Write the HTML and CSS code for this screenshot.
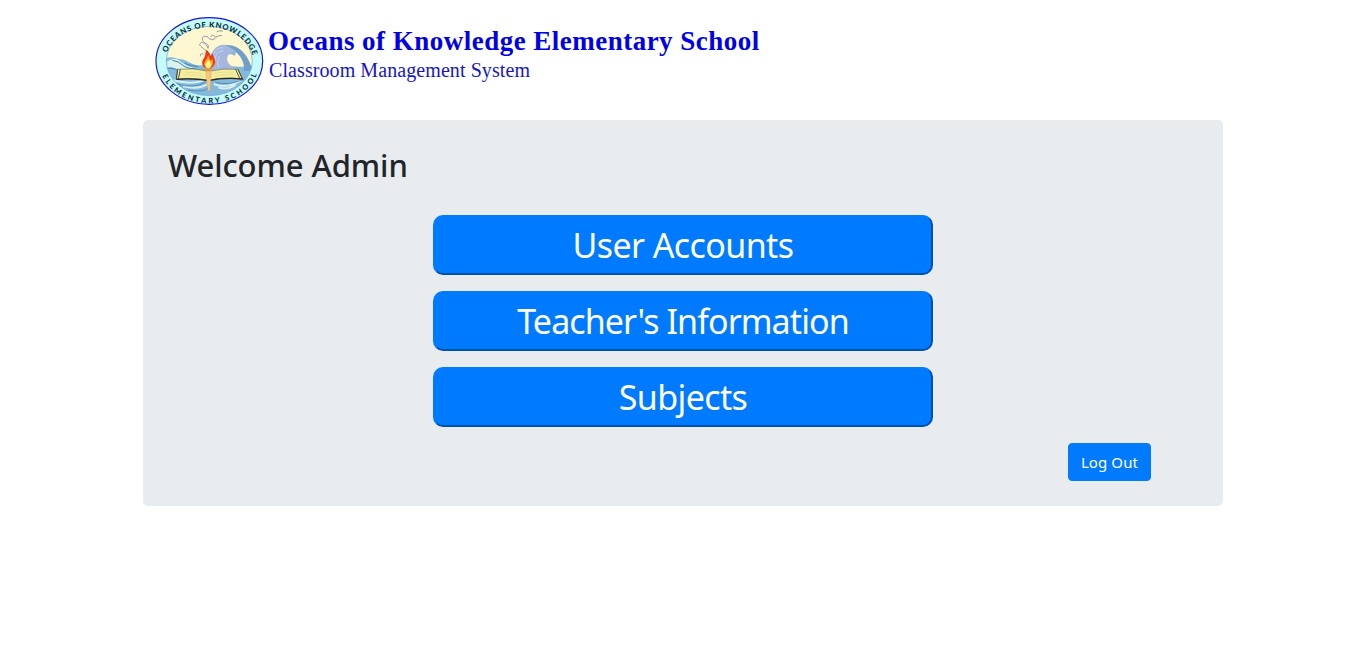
FILE: index.html
```html
<!DOCTYPE html>
<html lang="en">
<head>
<meta charset="utf-8">
<title>Classroom Management System</title>
<link rel="stylesheet" href="styles.css">
</head>
<body>
<div class="container">
  <header class="header">
    <svg class="logo" viewBox="0 0 360 300" role="img" aria-label="School seal">
      <defs>
        <clipPath id="inner"><ellipse cx="178" cy="153" rx="129" ry="104"/></clipPath>
        <path id="top-arc" d="M45 160 A133 108 0 0 1 311 160"/>
        <path id="bottom-arc" d="M29 158 A149 122 0 0 0 327 158"/>
      </defs>
      <ellipse cx="178" cy="153" rx="160" ry="130" fill="#c5fbff" stroke="#1414dc" stroke-width="3.5"/>
      <g clip-path="url(#inner)">
        <rect x="40" y="40" width="280" height="230" fill="#fff7cf"/>
        <path d="M40 150 C62 132 78 148 94 148 C110 149 119 162 140 166 C164 169 180 155 186 138 C193 111 220 101 243 113 C256 119 263 130 252 137 C244 129 231 132 226 143 C217 165 242 177 310 166 V280 H40Z" fill="#84b8dc"/>
        <path d="M180 154 C180 123 202 100 228 105 C247 108 258 119 264 130 C251 122 237 126 232 140 C228 157 241 172 276 185 L190 190Z" fill="#a6b7df"/>
        <path d="M226 105 C268 101 298 139 307 181 L282 184 C286 155 267 123 226 105Z" fill="#6f9fca"/>
        <path d="M52 154 Q76 137 94 157 Q109 168 132 174 L83 182 Q69 167 48 174Z" fill="#d9f3ed"/>
        <path d="M67 151 Q87 154 96 164 T137 178 M50 174 Q79 174 87 184 M104 160 Q122 169 145 169" fill="none" stroke="#407fae" stroke-width="3"/>
        <path d="M68 211 Q126 225 161 211 M99 229 Q145 240 173 222 M191 222 Q230 238 273 211 M205 232 Q232 242 257 224" fill="none" stroke="#d8f0ee" stroke-width="6"/>
        <path d="M75 220 Q127 239 167 216 M196 217 Q240 228 282 207 M113 240 Q160 248 176 234" fill="none" stroke="#4c86b5" stroke-width="2.5"/>
        <path d="M192 133 Q196 112 220 113 M195 153 Q193 126 220 122 M205 172 Q199 154 208 139" fill="none" stroke="#c3d3e8" stroke-width="3"/>
      </g>
      <ellipse cx="178" cy="153" rx="129" ry="104" fill="none" stroke="#63a9cf" stroke-width="2"/>
      <path d="M168 122 C157 111 144 107 151 100 C160 92 170 105 174 115 C180 101 163 102 158 92 C153 80 166 74 175 83 C184 92 196 91 195 81 C193 73 181 76 183 81 M198 82 Q206 76 216 76 M151 139 Q150 129 160 132 M200 66 Q209 59 218 64" fill="none" stroke="#8f99aa" stroke-width="3"/>
      <path d="M83 178 Q132 172 176 184 Q219 174 264 178 L278 207 Q218 199 176 211 Q133 202 79 207Z" fill="#f3ef9f" stroke="#46482f" stroke-width="1.5"/>
      <path d="M79 208 Q131 204 176 212 Q221 202 278 207" fill="none" stroke="#25251d" stroke-width="4"/>
      <path d="M83 178 L79 207 M91 178 L85 207 M264 178 L277 207 M257 178 L270 207" stroke="#34352a" stroke-width="2.5"/>
      <path d="M105 187 Q137 185 157 192 M103 195 Q134 193 158 200 M194 190 Q223 184 250 187 M196 198 Q225 192 252 194" stroke="#dcd887" stroke-width="2" fill="none"/>
      <path d="M165 171 H185 L180 242 H174Z" fill="#f5c87c" stroke="#d99b50" stroke-width="1"/>
      <path d="M160 172 Q173 182 188 171 L182 184 H166Z" fill="#dd9343"/>
      <path d="M169 175 C151 167 156 150 163 143 C168 134 165 127 169 119 C178 126 181 132 181 139 L188 129 C188 143 201 151 193 164 C188 173 180 177 169 175Z" fill="#ef3515"/>
      <path d="M171 175 C158 166 162 157 170 147 L174 136 C179 143 180 147 180 152 L187 147 C193 162 185 175 171 175Z" fill="#ffad24"/>
      <path d="M171 174 C162 164 169 158 176 150 C184 161 186 169 178 175Z" fill="#fff58a"/>
      <g class="seal-text">
        <text><textPath href="#top-arc" startOffset="32" textLength="323" lengthAdjust="spacing">OCEANS OF KNOWLEDGE</textPath></text>
        <text class="seal-bottom"><textPath href="#bottom-arc" startOffset="40" textLength="350" lengthAdjust="spacing">ELEMENTARY SCHOOL</textPath></text>
      </g>
    </svg>
    <div class="brand">
      <div class="school">Oceans of Knowledge Elementary School</div>
      <div class="system">Classroom Management System</div>
    </div>
  </header>
  <main class="panel">
    <h1 class="welcome">Welcome Admin</h1>
    <nav class="menu">
      <button class="menu-button users">User Accounts</button>
      <button class="menu-button teachers">Teacher's Information</button>
      <button class="menu-button subjects">Subjects</button>
    </nav>
    <div class="actions"><button class="logout">Log Out</button></div>
  </main>
</div>
</body>
</html>
```
FILE: styles.css
```css
* { box-sizing: border-box; }
body { margin: 0; background: #fff; font-family: "Noto Sans", "Open Sans", sans-serif; }
.container { width: 1080px; margin: 0 auto; }
.header { display: flex; height: 120px; padding: 10px 0 0 7px; }
.logo { width: 120px; height: 100px; flex: none; }
.seal-text { font: 900 23px "Lato", sans-serif; fill: #06303a; }
.seal-bottom { font-size: 22px; }
.brand { padding-top: 15px; margin-left: -2px; font-family: "Liberation Serif", serif; color: #0000e8; white-space: nowrap; }
.school { font-size: 27px; font-weight: 700; line-height: 32px; letter-spacing: .48px; }
.system { font-size: 20px; line-height: 27px; letter-spacing: .08px; padding-left: 1px; color: #1616c8; }
.panel { height: 386px; padding: 24px 25px; background: #e9ecef; border-radius: 5px; }
.welcome { margin: 0; height: 71px; font-size: 31px; font-weight: 500; line-height: 43px; letter-spacing: -.08px; color: #212529; white-space: nowrap; }
.menu { display: flex; flex-direction: column; align-items: center; gap: 16px; }
.menu-button { width: 500px; height: 60px; padding: 0; border: 2px outset #007bff; border-radius: 10px; background: #007bff; color: #fff; font-family: inherit; font-size: 34px; line-height: 56px; letter-spacing: -.6px; }
.teachers { letter-spacing: -.92px; }
.actions { display: flex; justify-content: flex-end; padding: 16px 47px 0 0; }
.logout { width: 83px; height: 38px; padding: 0; border: 1px solid #007bff; border-radius: 4px; background: #007bff; color: #fff; font-family: inherit; font-size: 15px; letter-spacing: .1px; }
```
